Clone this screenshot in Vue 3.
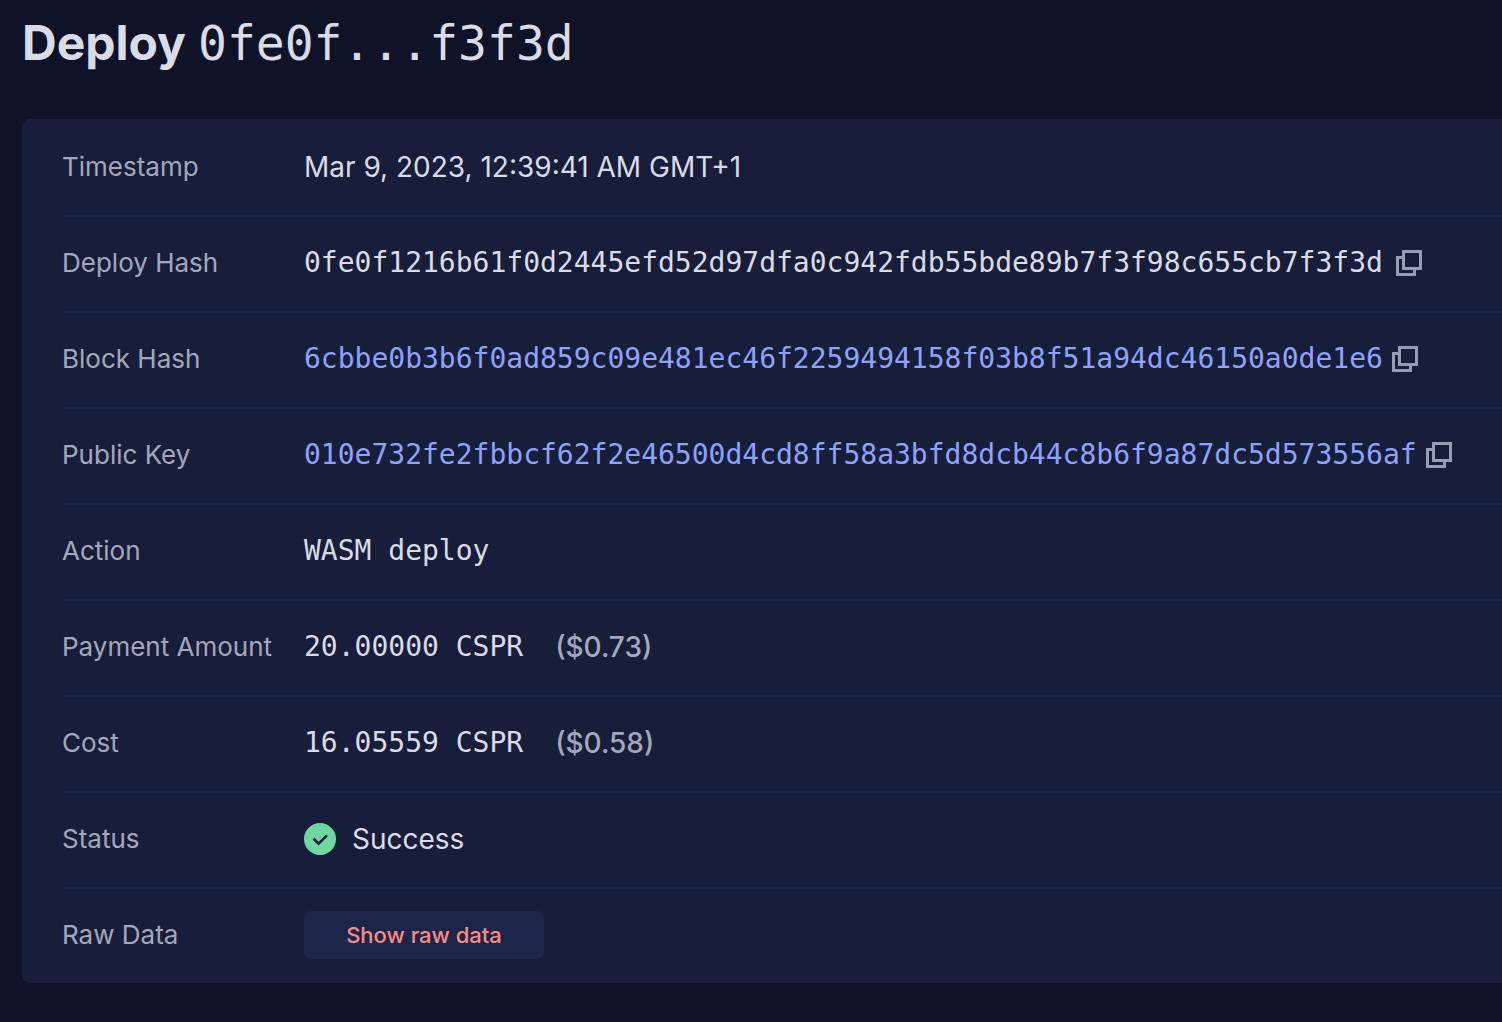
<script setup>
const rows = [
  { label: 'Timestamp', text: 'Mar 9, 2023, 12:39:41 AM GMT+1', kind: 'text' },
  { label: 'Deploy Hash', text: '0fe0f1216b61f0d2445efd52d97dfa0c942fdb55bde89b7f3f98c655cb7f3f3d', kind: 'hash' },
  { label: 'Block Hash', text: '6cbbe0b3b6f0ad859c09e481ec46f2259494158f03b8f51a94dc46150a0de1e6', kind: 'link' },
  { label: 'Public Key', text: '010e732fe2fbbcf62f2e46500d4cd8ff58a3bfd8dcb44c8b6f9a87dc5d573556af', kind: 'link' },
  { label: 'Action', text: 'WASM deploy', kind: 'mono' },
  { label: 'Payment Amount', text: '20.00000 CSPR', fiat: '($0.73)', kind: 'mono' },
  { label: 'Cost', text: '16.05559 CSPR', fiat: '($0.58)', kind: 'mono' },
  { label: 'Status', text: 'Success', kind: 'status' },
  { label: 'Raw Data', text: 'Show raw data', kind: 'button' },
]
</script>

<template>
  <main class="page">
    <h1 class="title">Deploy <span class="short-hash">0fe0f...f3f3d</span></h1>
    <section class="card">
      <table class="details">
        <tbody>
          <tr v-for="row in rows" :key="row.label">
            <th scope="row">{{ row.label }}</th>
            <td>
              <div class="value" :class="row.kind">
                <svg v-if="row.kind === 'status'" class="check" viewBox="0 0 32 32" aria-hidden="true">
                  <circle cx="16" cy="16" r="16" fill="#6fd8a1" />
                  <path d="M9.6 15.8 14.6 20.6 23 12.3" fill="none" stroke="#171e3a" stroke-width="2.6" />
                </svg>
                <button v-if="row.kind === 'button'" type="button" class="raw">{{ row.text }}</button>
                <a v-else-if="row.kind === 'link'" href="#">{{ row.text }}</a>
                <span v-else>{{ row.text }}</span>
                <span v-if="row.fiat" class="fiat">{{ row.fiat }}</span>
                <button
                  v-if="row.kind === 'hash' || row.kind === 'link'"
                  type="button"
                  class="copy"
                  :aria-label="'Copy ' + row.label"
                >
                  <svg viewBox="0 0 26 26" fill="none" stroke="currentColor" stroke-width="3">
                    <path d="M7.5 1.5h17v17h-17zM6 7.5H1.5v17h17V20" />
                  </svg>
                </button>
              </div>
            </td>
          </tr>
        </tbody>
      </table>
    </section>
  </main>
</template>

<style>
body {
  margin: 0;
  background: #0f1327;
}
</style>

<style scoped>
.page {
  box-sizing: border-box;
  min-height: 100vh;
  padding: 11px 0 0 22px;
  background: #0f1327;
  color: #dadce5;
  font-family: Inter, sans-serif;
}

.title {
  display: flex;
  align-items: baseline;
  gap: 12px;
  margin: 0 0 44px;
  font-size: 48px;
  line-height: 64px;
  font-weight: 700;
}

.short-hash {
  font-family: "DejaVu Sans Mono", monospace;
  font-weight: 400;
}

.card {
  padding-left: 40px;
  border-radius: 8px 0 0 8px;
  background: #171e3a;
}

.details {
  width: 100%;
  border-collapse: collapse;
}

th,
td {
  height: 96px;
  padding: 0;
  text-align: left;
  vertical-align: middle;
}

tr + tr th,
tr + tr td {
  box-shadow: inset 0 2px #192543;
}

th {
  width: 242px;
  color: #a3a8ba;
  font-size: 26px;
  line-height: 32px;
  font-weight: 400;
  white-space: nowrap;
}

.value {
  display: flex;
  align-items: center;
  font-size: 28px;
  line-height: 32px;
  white-space: nowrap;
}

.hash,
.link,
.mono {
  font-family: "DejaVu Sans Mono", monospace;
}

.hash {
  gap: 13px;
}

.link {
  gap: 9px;
}

.link a {
  color: #8ea2fb;
  text-decoration: none;
}

.mono {
  gap: 32px;
}

.fiat {
  color: #a3a8ba;
  font-family: Inter, sans-serif;
  font-weight: 500;
}

.status {
  gap: 16px;
}

.check {
  width: 32px;
  height: 32px;
}

.copy {
  display: flex;
  padding: 0;
  border: 0;
  background: none;
  color: #989eb2;
  cursor: pointer;
}

.copy svg {
  width: 26px;
  height: 26px;
}

.raw {
  width: 240px;
  height: 48px;
  padding: 0;
  border: 0;
  border-radius: 8px;
  background: #1c264a;
  color: #ff8b80;
  font-family: inherit;
  font-size: 22px;
  font-weight: 500;
  cursor: pointer;
}
</style>
